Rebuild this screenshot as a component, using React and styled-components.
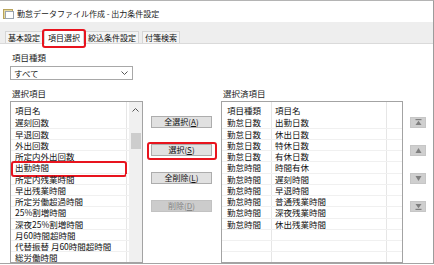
import React from "react";
import styled, { createGlobalStyle } from "styled-components";

const Global = createGlobalStyle`
  html, body { margin: 0; padding: 0; background: #fff; }
  body { font-family: "Noto Sans CJK JP", "Noto Sans", sans-serif; color: #111; }
  * { box-sizing: border-box; }
`;

const Window = styled.div`
  width: 434px;
  height: 264px;
  border-top: 1px solid #b4b4b4;
  border-right: 1px solid #9c9c9c;
  border-bottom: 1px solid #a4a4a4;
  display: flex;
  flex-direction: column;
  overflow: hidden;
  background: #fff;
`;

const TitleBar = styled.div`
  height: 21px;
  flex: none;
  display: flex;
  align-items: center;
  gap: 3px;
  padding: 3px 0 0 3px;
  font-size: 8px;
  line-height: 11px;
  color: #222;
`;

const TabStrip = styled.div`
  height: 22px;
  flex: none;
  background: #eeeeee;
  border-bottom: 1px solid #dadada;
  display: flex;
  align-items: flex-end;
  padding-left: 5px;
`;

const Tab = styled.div`
  position: relative;
  height: ${(p) => (p.$active ? "15px" : "12px")};
  margin-bottom: ${(p) => (p.$active ? "-1px" : "0")};
  margin-left: ${(p) => p.$ml || 0}px;
  padding: ${(p) => (p.$active ? "2px 3px 0" : "0 2px")};
  background: ${(p) => (p.$active ? "#fff" : "#f4f4f4")};
  border: 1px solid #d6d6d6;
  border-bottom: none;
  font-size: 8px;
  line-height: 11px;
  white-space: nowrap;
  z-index: ${(p) => (p.$active ? 1 : 0)};
`;

const RedFrame = styled.div`
  position: absolute;
  top: ${(p) => p.$t}px;
  bottom: ${(p) => p.$b}px;
  left: ${(p) => p.$l}px;
  right: ${(p) => p.$r}px;
  border: 2px solid #e8141e;
  border-radius: 3px;
  pointer-events: none;
`;

const Content = styled.div`
  flex: 1;
  min-height: 0;
  display: flex;
  flex-direction: column;
  padding: 7px 0 0 10px;
`;

const Label = styled.div`
  height: 12px;
  padding-left: 2px;
  font-size: 8.5px;
  line-height: 12px;
  color: #1a1a1a;
  white-space: nowrap;
`;

const Select = styled.div`
  margin-top: 3px;
  width: 123px;
  height: 14px;
  border: 1px solid #a8a8a8;
  display: flex;
  align-items: center;
  justify-content: space-between;
  padding: 0 4px 0 3px;
  font-size: 8.5px;
  line-height: 12px;
`;

const Main = styled.div`
  flex: 1;
  min-height: 0;
  margin-top: 7px;
  display: flex;
`;

const Column = styled.div`
  width: ${(p) => p.$w}px;
  margin-left: ${(p) => p.$ml || 0}px;
  display: flex;
  flex-direction: column;
  flex: none;
`;

const ButtonColumn = styled.div`
  width: ${(p) => p.$w}px;
  margin-left: ${(p) => p.$ml}px;
  padding-top: ${(p) => p.$pt}px;
  display: flex;
  flex-direction: column;
  gap: ${(p) => p.$gap}px;
  flex: none;
`;

const ListBox = styled.div`
  margin-top: 2px;
  flex: 1;
  min-height: 0;
  border: 1px solid #a3a3a3;
  display: flex;
  overflow: hidden;
`;

const ListBody = styled.div`
  flex: 1;
  display: flex;
  flex-direction: column;
`;

const HeaderRow = styled.div`
  height: 15.4px;
  flex: none;
  display: flex;
`;

const Row = styled.div`
  position: relative;
  height: 11.25px;
  flex: none;
  display: flex;
  border-bottom: 1px solid #f0f0f0;
`;

const Cell = styled.div`
  width: ${(p) => (p.$w ? p.$w + "px" : "auto")};
  flex: ${(p) => (p.$w ? "none" : "1")};
  padding-left: ${(p) => p.$pl}px;
  padding-top: ${(p) => (p.$head ? 2 : 0)}px;
  border-right: ${(p) => (p.$w ? "1px solid #e6e6e6" : "none")};
  font-size: 8.5px;
  line-height: ${(p) => (p.$head ? "13px" : "10.25px")};
  white-space: nowrap;
  overflow: hidden;
  color: #111;
`;

const ScrollBar = styled.div`
  width: 13px;
  flex: none;
  background: #f0f0f0;
  display: flex;
  flex-direction: column;
  align-items: center;
  padding-top: 6px;
`;

const Thumb = styled.div`
  width: 10px;
  height: 16px;
  margin-top: 21px;
  background: #cdcdcd;
`;

const Button = styled.div`
  position: relative;
  height: 12px;
  width: 100%;
  background: ${(p) => (p.$disabled ? "#cccccc" : "#e1e1e1")};
  border: 1px solid ${(p) => (p.$disabled ? "#c2c2c2" : "#adadad")};
  color: ${(p) => (p.$disabled ? "#858585" : "#111")};
  font-size: 8px;
  line-height: 10px;
  text-align: center;
  white-space: nowrap;
`;

const ArrowButton = styled.div`
  width: 16px;
  height: 11px;
  background: #cfcfcf;
  border: 1px solid #c6c6c6;
  display: flex;
  align-items: center;
  justify-content: center;
`;

const Chevron = ({ up }) => (
  <svg width="7" height="4" viewBox="0 0 7 4">
    <polyline
      points={up ? "0.5,3.5 3.5,0.5 6.5,3.5" : "0.5,0.5 3.5,3.5 6.5,0.5"}
      fill="none"
      stroke="#555"
      strokeWidth="1"
    />
  </svg>
);

const AppIcon = () => (
  <svg width="11" height="11" viewBox="0 0 11 11">
    <rect x="0.5" y="1.5" width="9" height="9" fill="#e8d9a0" stroke="#b8a35a" />
    <rect x="2.5" y="3.5" width="8" height="7" fill="#fff" stroke="#9aa4b0" />
  </svg>
);

const ArrowIcon = ({ dir, bar }) => (
  <svg width="7" height="7" viewBox="0 0 7 7">
    {bar === "top" && <rect x="0.5" y="0" width="6" height="1.2" fill="#7f7f7f" />}
    {bar === "bottom" && <rect x="0.5" y="5.8" width="6" height="1.2" fill="#7f7f7f" />}
    {dir === "up" ? (
      <polygon points={bar ? "3.5,1.8 6.5,6 0.5,6" : "3.5,1 6.5,6 0.5,6"} fill="#7f7f7f" />
    ) : (
      <polygon points={bar ? "0.5,1 6.5,1 3.5,5.2" : "0.5,1 6.5,1 3.5,6"} fill="#7f7f7f" />
    )}
  </svg>
);

const leftItems = [
  "遅刻回数",
  "早退回数",
  "外出回数",
  "所定内外出回数",
  "出勤時間",
  "所定内残業時間",
  "早出残業時間",
  "所定労働超過時間",
  "25%割増時間",
  "深夜25%割増時間",
  "月60時間超時間",
  "代替振替 月60時間超時間",
  "総労働時間",
];

const rightItems = [
  ["勤怠日数", "出勤日数"],
  ["勤怠日数", "休出日数"],
  ["勤怠日数", "特休日数"],
  ["勤怠日数", "有休日数"],
  ["勤怠時間", "時間有休"],
  ["勤怠時間", "遅刻時間"],
  ["勤怠時間", "早退時間"],
  ["勤怠時間", "普通残業時間"],
  ["勤怠時間", "深夜残業時間"],
  ["勤怠時間", "休出残業時間"],
  ["", ""],
  ["", ""],
  ["", ""],
];

const buttons = [
  { t: "全選択(", k: "A" },
  { t: "選択(", k: "S", red: true },
  { t: "全削除(", k: "L" },
  { t: "削除(", k: "D", disabled: true },
];

export default function App() {
  return (
    <>
      <Global />
      <Window>
        <TitleBar>
          <AppIcon />
          <span>勤怠データファイル作成 - 出力条件設定</span>
        </TitleBar>
        <TabStrip>
          <Tab>基本設定</Tab>
          <Tab $active $ml={1}>
            項目選択
            <RedFrame $t={-1} $b={-4} $l={-3} $r={-3} />
          </Tab>
          <Tab $ml={1}>絞込条件設定</Tab>
          <Tab $ml={3}>付箋検索</Tab>
        </TabStrip>
        <Content>
          <Label>項目種類</Label>
          <Select>
            <span>すべて</span>
            <Chevron />
          </Select>
          <Main>
            <Column $w={133}>
              <Label>選択項目</Label>
              <ListBox>
                <ListBody>
                  <HeaderRow>
                    <Cell $w={116} $pl={4} $head>項目名</Cell>
                  </HeaderRow>
                  {leftItems.map((it, i) => (
                    <Row key={i}>
                      <Cell $w={116} $pl={4}>{it}</Cell>
                      {i === 4 && <RedFrame $t={-1} $b={-4} $l={0} $r={2} />}
                    </Row>
                  ))}
                </ListBody>
                <ScrollBar>
                  <Chevron up />
                  <Thumb />
                </ScrollBar>
              </ListBox>
            </Column>
            <ButtonColumn $w={61} $ml={8} $pt={29} $gap={16}>
              {buttons.map((b) => (
                <Button key={b.k} $disabled={b.disabled}>
                  {b.t}
                  <u>{b.k}</u>)
                  {b.red && <RedFrame $t={-3} $b={-5} $l={-5} $r={-6} />}
                </Button>
              ))}
            </ButtonColumn>
            <Column $w={182} $ml={9}>
              <Label>選択済項目</Label>
              <ListBox>
                <ListBody>
                  <HeaderRow>
                    <Cell $w={50} $pl={5} $head>項目種類</Cell>
                    <Cell $w={115} $pl={3} $head>項目名</Cell>
                    <Cell $head />
                  </HeaderRow>
                  {rightItems.map((r, i) => (
                    <Row key={i}>
                      <Cell $w={50} $pl={5}>{r[0]}</Cell>
                      <Cell $w={115} $pl={3}>{r[1]}</Cell>
                      <Cell />
                    </Row>
                  ))}
                </ListBody>
              </ListBox>
            </Column>
            <ButtonColumn $w={16} $ml={7} $pt={30} $gap={17}>
              <ArrowButton><ArrowIcon dir="up" bar="top" /></ArrowButton>
              <ArrowButton><ArrowIcon dir="up" /></ArrowButton>
              <ArrowButton><ArrowIcon dir="down" /></ArrowButton>
              <ArrowButton><ArrowIcon dir="down" bar="bottom" /></ArrowButton>
            </ButtonColumn>
          </Main>
        </Content>
      </Window>
    </>
  );
}
